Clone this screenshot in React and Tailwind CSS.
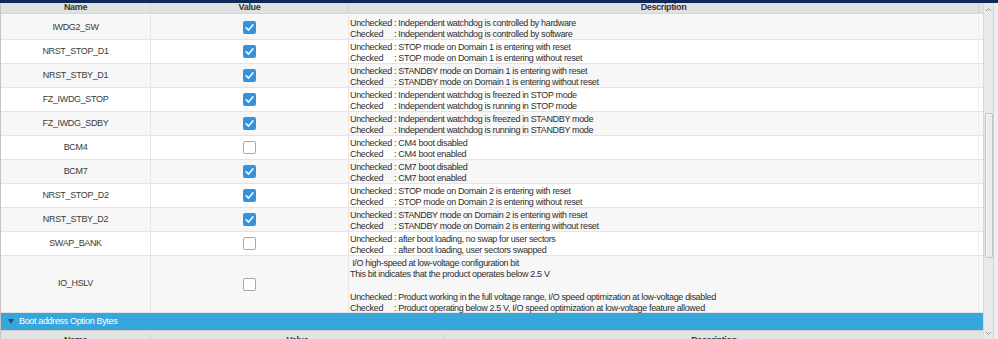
import React from 'react';

const rows = [
  ['IWDG2_SW', true, 'Independent watchdog is controlled by hardware', 'Independent watchdog is controlled by software'],
  ['NRST_STOP_D1', true, 'STOP mode on Domain 1 is entering with reset', 'STOP mode on Domain 1 is entering without reset'],
  ['NRST_STBY_D1', true, 'STANDBY mode on Domain 1 is entering with reset', 'STANDBY mode on Domain 1 is entering without reset'],
  ['FZ_IWDG_STOP', true, 'Independent watchdog is freezed in STOP mode', 'Independent watchdog is running in STOP mode'],
  ['FZ_IWDG_SDBY', true, 'Independent watchdog is freezed in STANDBY mode', 'Independent watchdog is running in STANDBY mode'],
  ['BCM4', false, 'CM4 boot disabled', 'CM4 boot enabled'],
  ['BCM7', true, 'CM7 boot disabled', 'CM7 boot enabled'],
  ['NRST_STOP_D2', true, 'STOP mode on Domain 2 is entering with reset', 'STOP mode on Domain 2 is entering without reset'],
  ['NRST_STBY_D2', true, 'STANDBY mode on Domain 2 is entering with reset', 'STANDBY mode on Domain 2 is entering without reset'],
  ['SWAP_BANK', false, 'after boot loading, no swap for user sectors', 'after boot loading, user sectors swapped'],
];

const CheckBox = ({ checked }) =>
  checked ? (
    <div className="w-[13px] h-[13px] rounded-[2px] bg-[#3592de] flex items-center justify-center">
      <svg width="11" height="11" viewBox="0 0 11 11">
        <path d="M2.2 5.8 L4.6 8.1 L8.9 2.8" fill="none" stroke="#ffffff" strokeWidth="1.5" strokeLinecap="round" strokeLinejoin="round" />
      </svg>
    </div>
  ) : (
    <div className="w-[13px] h-[13px] rounded-[2px] bg-white border border-[#a8a8a8]"></div>
  );

const Line = ({ label, text }) => (
  <div className="whitespace-nowrap">
    <span className="inline-block w-[44px]">{label}</span>: {text}
  </div>
);

const Row = ({ name, checked, gray, children, tall }) => (
  <div
    className={`flex border-b border-[#e4e4e4] ${tall ? 'h-[57px]' : 'h-[24px]'} ${gray ? 'bg-[#f7f7f7]' : 'bg-white'}`}
  >
    <div className="w-[150px] shrink-0 border-r border-[#e6e6e6] flex items-center justify-center text-[#3a3a3a]">
      {name}
    </div>
    <div className="w-[198px] shrink-0 border-r border-[#e6e6e6] flex items-center justify-center">
      <CheckBox checked={checked} />
    </div>
    <div className="flex-1 pl-[1px] pt-[2px] leading-[11.2px] text-[#2e2e2e]">{children}</div>
    <div className="w-[5px] shrink-0 border-l border-[#eeeeee]"></div>
  </div>
);

export default function App() {
  return (
    <div
      className="w-[998px] h-[339px] overflow-hidden bg-[#f0f0f0] flex flex-col text-[9px] tracking-[-0.35px]"
      style={{ fontFamily: '"Liberation Sans", Arial, sans-serif' }}
    >
      <div className="h-[3px] bg-[#0c2a58] shrink-0"></div>
      <div className="flex flex-1 min-h-0">
        {/* Table */}
        <div className="w-[983px] shrink-0 flex flex-col border-l border-[#c4c4c4] overflow-hidden">
          <div className="h-[10px] shrink-0 flex items-end bg-[#e1e1e1] font-bold text-[#333] overflow-hidden leading-[11px]">
            <div className="w-[150px] h-full flex items-end justify-center border-r border-[#d4d4d4]">Name</div>
            <div className="w-[198px] h-full flex items-end justify-center border-r border-[#d0d0d0]">Value</div>
            <div className="flex-1 text-center">Description</div>
            <div className="w-[5px] h-full border-l border-[#d0d0d0]"></div>
          </div>
          <div className="h-[3px] shrink-0 bg-[#f7f7f7] border-t border-[#d6d6d6]"></div>
          {rows.map(([name, checked, un, ch], i) => (
            <Row key={name} name={name} checked={checked} gray={i % 2 === 0}>
              <Line label="Unchecked" text={un} />
              <Line label="Checked" text={ch} />
            </Row>
          ))}
          <Row name="IO_HSLV" checked={false} gray tall>
            <div className="whitespace-pre">{' I/O high-speed at low-voltage configuration bit'}</div>
            <div>This bit indicates that the product operates below 2.5 V</div>
            <div className="h-[11.2px]"></div>
            <Line label="Unchecked" text="Product working in the full voltage range, I/O speed optimization at low-voltage disabled" />
            <Line label="Checked" text="Product operating below 2.5 V, I/O speed optimization at low-voltage feature allowed" />
          </Row>
          <div className="h-[17px] shrink-0 bg-[#38a5db] flex items-center text-white">
            <svg width="6" height="5" viewBox="0 0 6 5" className="ml-[7px] mr-[5px]">
              <path d="M0 0 H6 L3 5 Z" fill="#27506f" />
            </svg>
            <span>Boot address Option Bytes</span>
          </div>
          <div className="flex-1 flex bg-[#e3e3e3] border-t border-[#d0d0d0] font-bold text-[#333] leading-[11px] pt-[4px] overflow-hidden">
            <div className="w-[150px] text-center border-r border-[#d0d0d0]">Name</div>
            <div className="w-[294px] text-center border-r border-[#d0d0d0]">Value</div>
            <div className="flex-1 text-center">Description</div>
          </div>
        </div>
        {/* Scrollbar */}
        <div className="w-[10px] shrink-0 bg-[#e9e9e9] border-l border-[#d8d8d8] flex flex-col items-center">
          <svg width="7" height="5" viewBox="0 0 7 5" className="mt-[4px]">
            <path d="M1 4 L3.5 1.5 L6 4" fill="none" stroke="#9a9a9a" strokeWidth="1" />
          </svg>
          <div className="mt-[101px] w-[8px] h-[145px] rounded-[2px] border border-[#c2c2c2] bg-[#ececec] shadow-[inset_1px_1px_0_#fafafa]"></div>
          <div className="flex-1"></div>
          <svg width="7" height="5" viewBox="0 0 7 5" className="mb-[3px]">
            <path d="M1 1 L3.5 3.5 L6 1" fill="none" stroke="#9a9a9a" strokeWidth="1" />
          </svg>
        </div>
        <div className="flex-1 bg-[#eeeeee] border-l border-[#d4d4d4]"></div>
      </div>
    </div>
  );
}
